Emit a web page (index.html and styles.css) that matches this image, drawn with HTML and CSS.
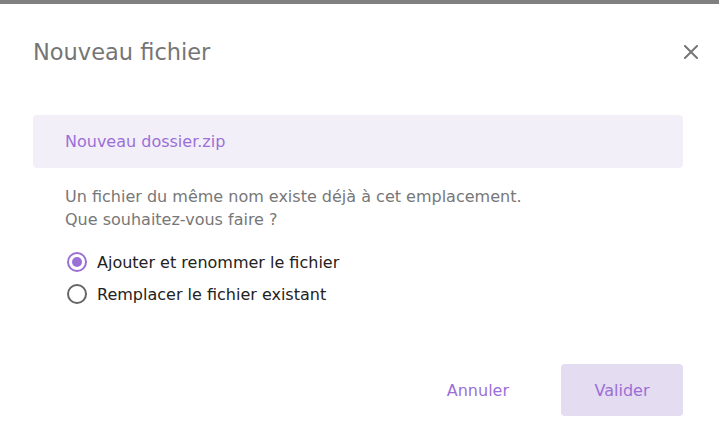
FILE: index.html
```html
<!DOCTYPE html>
<html lang="fr">

<head>
    <meta charset="UTF-8">
    <meta name="viewport" content="width=device-width, initial-scale=1.0">
    <title>Nouveau fichier</title>
    <link rel="stylesheet" href="styles.css">
</head>

<body>
    <div id="dialog">
        <header id="dialog-header">
            <h1 id="dialog-title">Nouveau fichier</h1>
            <button id="close-button" aria-label="Fermer">
                <svg width="14" height="14" viewBox="0 0 14 14">
                    <path d="M1 1 L13 13 M13 1 L1 13" stroke="#777" stroke-width="2" stroke-linecap="square" fill="none" />
                </svg>
            </button>
        </header>
        <div id="dialog-body">
            <div id="file-name">Nouveau dossier.zip</div>
            <p id="message">Un fichier du même nom existe déjà à cet emplacement.<br>Que souhaitez-vous faire ?</p>
            <div id="choices">
                <label class="choice">
                    <input type="radio" name="action" checked>
                    <span class="radio"></span>
                    Ajouter et renommer le fichier
                </label>
                <label class="choice">
                    <input type="radio" name="action">
                    <span class="radio"></span>
                    Remplacer le fichier existant
                </label>
            </div>
        </div>
        <footer id="dialog-footer">
            <button class="button text-button">Annuler</button>
            <button class="button filled-button">Valider</button>
        </footer>
    </div>
</body>

</html>
```

FILE: styles.css
```css
* {
    box-sizing: border-box;
}

body {
    margin: 0;
    font-family: "DejaVu Sans", "Noto Sans", sans-serif;
    background-color: #fff;
    border-top: 4px solid #808080;
}

#dialog {
    padding: 0 36px 0 33px;
}

#dialog-header {
    display: flex;
    align-items: center;
    justify-content: space-between;
    height: 96px;
    padding-bottom: 1px;
}

#dialog-title {
    margin: 0;
    font-size: 22.5px;
    font-weight: normal;
    color: #757575;
}

#close-button {
    border: none;
    background: none;
    padding: 0;
    width: 14px;
    height: 14px;
    margin-right: -15px;
    cursor: pointer;
}

#dialog-body {
    padding-top: 15px;
}

#file-name {
    height: 53px;
    display: flex;
    align-items: center;
    padding-left: 32px;
    background-color: #f2eff9;
    border-radius: 4px;
    color: #9b6fd6;
    font-size: 16px;
}

#message {
    margin: 17px 0 0 32px;
    font-size: 16px;
    line-height: 23px;
    color: #777;
}

#choices {
    display: flex;
    flex-direction: column;
    gap: 12px;
    margin: 21px 0 0 34px;
}

.choice {
    display: flex;
    align-items: center;
    gap: 10px;
    font-size: 16px;
    color: #222;
    cursor: pointer;
    height: 20px;
}

.choice input {
    display: none;
}

.radio {
    width: 20px;
    height: 20px;
    border-radius: 50%;
    border: 2px solid #666;
    display: flex;
    align-items: center;
    justify-content: center;
}

.choice input:checked + .radio {
    border-color: #9b6fd6;
}

.choice input:checked + .radio::after {
    content: "";
    width: 10px;
    height: 10px;
    border-radius: 50%;
    background-color: #9b6fd6;
}

#dialog-footer {
    display: flex;
    justify-content: flex-end;
    align-items: center;
    gap: 28px;
    margin-top: 60px;
}

.button {
    font-family: inherit;
    font-size: 16px;
    color: #9b6fd6;
    border: none;
    border-radius: 4px;
    height: 52px;
    cursor: pointer;
}

.text-button {
    background: none;
    padding: 0 24px;
}

.filled-button {
    background-color: #e4dcf0;
    width: 122px;
}
```
